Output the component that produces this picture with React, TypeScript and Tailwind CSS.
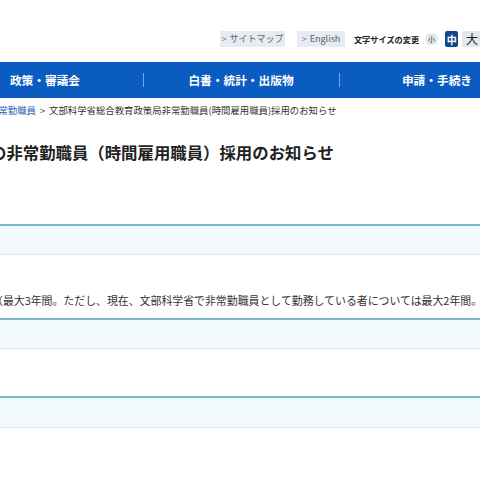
import React from 'react';

const navItems = ['政策・審議会', '白書・統計・出版物', '申請・手続き'];

const TopLinks = () => (
  <div className="h-[62px] flex items-start pt-[31px] pl-[220px] whitespace-nowrap">
    <a className="w-[67px] h-[16px] bg-[#e6ecf1] text-[#5a6470] text-[9px] flex items-center justify-center gap-[3px]">
      <span className="text-[#7a8590]">&gt;</span>サイトマップ
    </a>
    <a className="ml-[12px] w-[49px] h-[16px] bg-[#e6ecf1] text-[#5a6470] text-[9px] flex items-center justify-center gap-[3px]">
      <span className="text-[#7a8590]">&gt;</span>English
    </a>
    <span className="ml-[9px] h-[16px] flex items-center text-[8.2px] font-bold text-[#222]">文字サイズの変更</span>
    <span className="ml-[6px] mt-[2px] w-[13px] h-[12px] rounded-full bg-[#e4e8eb] text-[#333] text-[7px] flex items-center justify-center">小</span>
    <span className="ml-[7px] w-[14px] h-[16px] rounded-[2px] bg-[#12468f] text-white text-[10px] font-bold flex items-center justify-center">中</span>
    <span className="ml-[4px] w-[18px] h-[16px] rounded-[2px] bg-[#e4e8eb] text-[#222] text-[12px] flex items-center justify-end pr-[2px]">大</span>
  </div>
);

const NavBar = () => (
  <div className="h-[36px] bg-[#0a5cc0] flex items-center -ml-[53px]">
    {navItems.map((item, i) => (
      <div key={item} className="w-[196px] shrink-0 h-full flex items-center relative">
        {i > 0 && <span className="absolute left-0 top-[11px] w-px h-[14px] bg-[#7aa8e0]"></span>}
        <span className="flex-1 text-center text-white text-[11.7px] font-bold">{item}</span>
      </div>
    ))}
  </div>
);

const TableHead = ({ h }: { h: string }) => (
  <div className={`border-t-2 border-[#7db6ca] bg-[#f2f9fc] border-b border-b-[#dfe5e8] ${h}`}></div>
);

const App = () => {
  return (
    <div className="w-[480px] h-[480px] overflow-hidden bg-white font-['Noto_Sans_CJK_JP','Noto_Sans',sans-serif]">
      <TopLinks />
      <NavBar />

      <div className="h-[24px] flex items-center whitespace-nowrap text-[9.4px] text-[#333] -ml-[11px]">
        <a className="text-[#1a5cb0]">非常勤職員</a>
        <span className="mx-[4px] text-[#555]">&gt;</span>
        <span>文部科学省総合教育政策局非常勤職員(時間雇用職員)採用のお知らせ</span>
      </div>

      <h1 className="mt-[18px] h-[24px] leading-[24px] whitespace-nowrap text-[16.4px] font-bold text-[#222] -ml-[10px]">
        の非常勤職員（時間雇用職員）採用のお知らせ
      </h1>

      <div className="mt-[60px]">
        <TableHead h="h-[31px]" />
        <div className="h-[63px] pt-[37px] whitespace-nowrap text-[10.9px] leading-[16px] text-[#333] -ml-[8px]">
          （最大3年間。ただし、現在、文部科学省で非常勤職員として勤務している者については最大2年間。
        </div>
        <TableHead h="h-[31px]" />
        <div className="h-[47px]"></div>
        <TableHead h="h-[32px]" />
      </div>
    </div>
  );
};

export default App;
